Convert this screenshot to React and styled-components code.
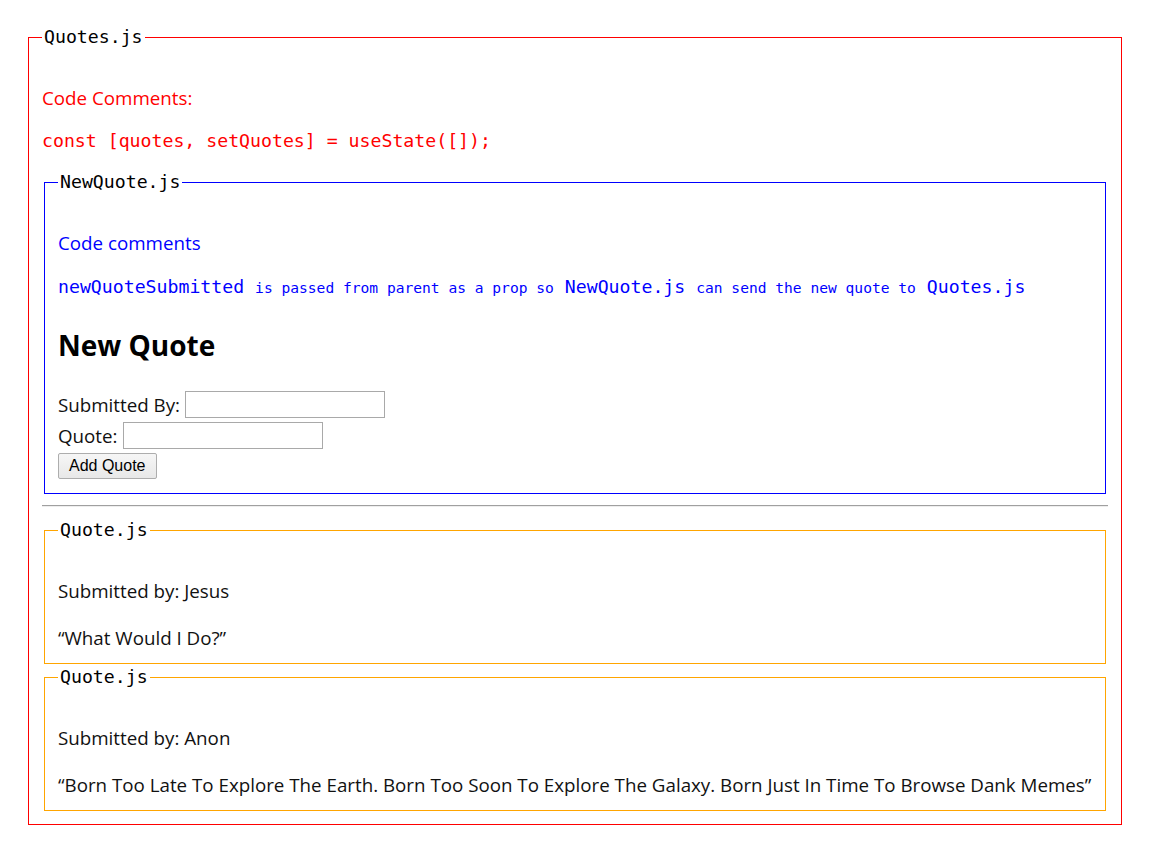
import React from 'react';
import styled, { createGlobalStyle } from 'styled-components';

const GlobalStyle = createGlobalStyle`
  body {
    margin: 8px;
    background: #fff;
    font-family: "Open Sans", "Noto Sans", sans-serif;
    color: #111;
  }
`;

const mono = `"DejaVu Sans Mono", "Liberation Mono", monospace`;

const Page = styled.div`
  padding: 16px 20px 12px;
`;

const Box = styled.fieldset`
  margin: ${props => (props.$outer ? '0' : '0 2px')};
  border: 1px solid ${props => props.$color};
  padding: 0 13px ${props => props.$bottom || 13}px;
  min-width: 0;
`;

const Legend = styled.legend`
  padding: 0 2px;
  font-family: ${mono};
  font-size: 18.2px;
  line-height: 26px;
  color: #000;
`;

const Comment = styled.p`
  margin: ${props => props.$top || 34}px 0 16px;
  font-size: 18.75px;
  line-height: 27px;
  color: ${props => props.$color};
`;

const CodeLine = styled.p`
  margin: 0 0 15px;
  font-family: ${mono};
  font-size: 18.2px;
  line-height: 27px;
  color: ${props => props.$color};
`;

const Note = styled.p`
  margin: 0;
  line-height: 29px;
  color: #0000ff;
  font-family: ${mono};
  font-size: 18.2px;
`;

const Small = styled.span`
  font-size: 14.6px;
`;

const Heading = styled.h2`
  margin: 25px 0 27px;
  font-size: 28px;
  line-height: 37px;
  font-weight: 700;
  color: #000;
`;

const Form = styled.form`
  display: flex;
  flex-direction: column;
  align-items: flex-start;
  gap: 4px;
`;

const Row = styled.label`
  display: flex;
  align-items: center;
  gap: 5px;
  font-size: 18.75px;
  line-height: 27px;
  color: #111;
`;

const Input = styled.input`
  box-sizing: border-box;
  width: 200px;
  height: 27px;
  border: 1px solid #a9a9a9;
  padding: 1px 2px;
  font-size: 16px;
  background: #fff;
`;

const Button = styled.button`
  box-sizing: border-box;
  height: 26px;
  padding: 0 10px;
  font-family: "Liberation Sans", Arial, sans-serif;
  font-size: 16px;
  color: #000;
  background: linear-gradient(#f6f6f6, #e8e8e8);
  border: 1px solid #adadad;
  border-radius: 2px;
`;

const Rule = styled.hr`
  margin: 11px 0 10px;
  border: none;
  border-top: 1px solid #a0a0a0;
  border-bottom: 1px solid #eee;
`;

const Text = styled.p`
  margin: ${props => props.$top}px 0 0;
  font-size: 18.75px;
  line-height: 27px;
  white-space: nowrap;
  color: #111;
`;

const quotes = [
  { id: 1, author: 'Jesus', text: 'What Would I Do?' },
  {
    id: 2,
    author: 'Anon',
    text: 'Born Too Late To Explore The Earth. Born Too Soon To Explore The Galaxy. Born Just In Time To Browse Dank Memes'
  }
];

const Quote = ({ quote }) => (
  <Box $color="#ffa500" $bottom={12}>
    <Legend>Quote.js</Legend>
    <Text $top={34}>Submitted by: {quote.author}</Text>
    <Text $top={20}>“{quote.text}”</Text>
  </Box>
);

const NewQuote = () => (
  <Box $color="#0000ff" $bottom={14}>
    <Legend>NewQuote.js</Legend>
    <Comment $color="#0000ff">Code comments</Comment>
    <Note>
      newQuoteSubmitted <Small>is passed from parent as a prop so</Small> NewQuote.js <Small>can send the new quote to</Small> Quotes.js
    </Note>
    <Heading>New Quote</Heading>
    <Form onSubmit={e => e.preventDefault()}>
      <Row>
        Submitted By: <Input type="text" />
      </Row>
      <Row>
        Quote: <Input type="text" />
      </Row>
      <Button type="submit">Add Quote</Button>
    </Form>
  </Box>
);

const App = () => (
  <Page>
    <GlobalStyle />
    <Box $outer $color="#ff0000" $bottom={13}>
      <Legend>Quotes.js</Legend>
      <Comment $color="#ff0000" $top={34}>
        Code Comments:
      </Comment>
      <CodeLine $color="#ff0000">const [quotes, setQuotes] = useState([]);</CodeLine>
      <NewQuote />
      <Rule />
      {quotes.map(quote => (
        <Quote key={quote.id} quote={quote} />
      ))}
    </Box>
  </Page>
);

export default App;
